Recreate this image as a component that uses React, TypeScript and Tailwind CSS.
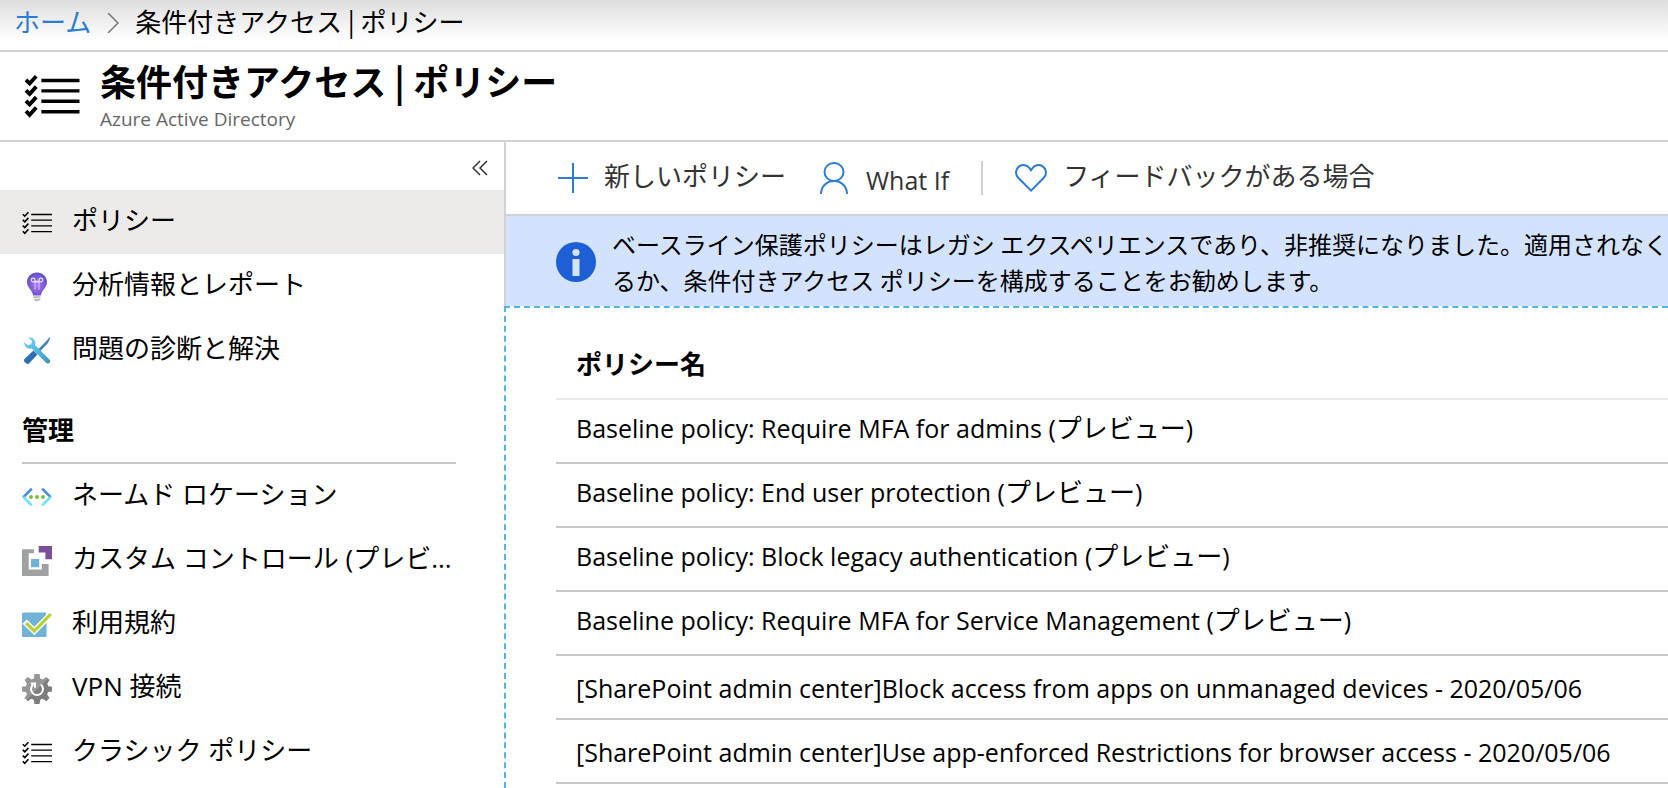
import type { ReactNode } from "react";

interface NavItem {
  label: ReactNode;
  icon: ReactNode;
  active?: boolean;
}

interface Policy {
  name: string;
  preview?: boolean;
}

const policies: Policy[] = [
  { name: "Baseline policy: Require MFA for admins", preview: true },
  { name: "Baseline policy: End user protection", preview: true },
  { name: "Baseline policy: Block legacy authentication", preview: true },
  { name: "Baseline policy: Require MFA for Service Management", preview: true },
  {
    name: "[SharePoint admin center]Block access from apps on unmanaged devices - 2020/05/06",
  },
  {
    name: "[SharePoint admin center]Use app-enforced Restrictions for browser access - 2020/05/06",
  },
];

function PolicyListIcon({ className, bold }: { className: string; bold?: boolean }) {
  return (
    <svg viewBox="0 0 30 24" fill="none" stroke="currentColor" className={className}>
      <path
        strokeWidth={bold ? 1.9 : 1.3}
        d="M9.2 3.5H30M9.2 9.2H30M9.2 14.9H30M9.2 20.6H30"
      />
      <path
        strokeWidth={bold ? 2.1 : 1.6}
        d="M.8 3.2l2 2L6.4 1.2M.8 8.9l2 2L6.4 6.9M.8 14.6l2 2L6.4 12.6M.8 20.3l2 2L6.4 18.3"
      />
    </svg>
  );
}

function BulbIcon() {
  return (
    <svg viewBox="0 0 30 30" className="size-[30px]">
      <defs>
        <radialGradient id="bulb" cx="0.5" cy="0.55" r="0.55">
          <stop offset="0" stopColor="#b077f0" />
          <stop offset="1" stopColor="#5f4fc8" />
        </radialGradient>
      </defs>
      <path
        fill="url(#bulb)"
        d="M15 0.500C9.300 0.500 5 4.800 5 10.100c0 5.600 4.600 7 6.200 13.400h7.600C20.400 17.100 25 15.700 25 10.100 25 4.800 20.700 0.500 15 0.500z"
      />
      <g fill="none" stroke="#efe3ff" strokeWidth="1.100">
        <path d="M13 9.400v8M17 9.400v8" opacity="0.7" />
        <path d="M17 9.400h-4M13 9.400v-1.400a1.900 1.900 0 1 0-1.900 1.900h7.800A1.900 1.900 0 1 0 17 8v1.400" />
      </g>
      <path
        fill="#b8b8b8"
        d="M11.300 24.200h7.200v1.400l-7.200.7zM11.700 27l6.600-.6v1.300L15.600 29.200h-2z"
      />
    </svg>
  );
}

function ToolsIcon() {
  return (
    <svg viewBox="0 0 30 30" className="size-[30px]">
      <defs>
        <linearGradient id="wrench" x1="0" y1="0" x2="1" y2="1">
          <stop offset="0" stopColor="#6fd3f5" />
          <stop offset="0.6" stopColor="#4fb2dc" />
          <stop offset="1" stopColor="#3c8fb8" />
        </linearGradient>
      </defs>
      <path fill="#2f6fb5" d="M11.500 14.500l4 4-9 9.500-2-.2L2 25.300l.2-2z" />
      <path fill="#3f87b5" d="M27.600 1.300l.8.8-2.600 5.200L17 16.400l-2-2 8.800-9z" />
      <path
        fill="url(#wrench)"
        d="M6.500 1.700c3-.9 6.600 1.200 6.800 5 .1.900 0 1.700-.3 2.400L27.600 23.700c1.800 2-1.200 5.200-3.300 3.300L9.800 12.400c-4 1.200-7.800-1.700-7.600-6.200l3.700 3 3.300-1 .8-3.200z"
      />
    </svg>
  );
}

function NamedLocationIcon() {
  return (
    <svg viewBox="0 0 30 30" className="size-[30px]">
      <g fill="none" strokeWidth="2.600">
        <path stroke="#3f8fdc" d="M9.800 6.700L1.200 15.400M20.200 6.700l8.600 8.700" />
        <path stroke="#6fe0fb" d="M1.200 14.800l8.600 8.500M28.800 14.800l-8.600 8.500" />
      </g>
      <g fill="#7fba3c">
        <circle cx="9" cy="15" r="1.900" />
        <circle cx="15" cy="15" r="1.900" />
        <circle cx="21" cy="15" r="1.900" />
      </g>
    </svg>
  );
}

function CustomControlIcon() {
  return (
    <svg viewBox="0 0 30 30" className="size-[30px]">
      <path fill="#a0a1a2" d="M0 3.300h12v4H6.700v16.200h13.100V18h6.800v12H0z" />
      <path fill="#7a4f98" d="M16.700 0H30v13.300h-6.600V6.500h-6.700z" />
      <path fill="#6fb3d6" d="M9 13h8.200v8.200H9z" />
    </svg>
  );
}

function TermsIcon() {
  return (
    <svg viewBox="0 0 30 30" className="size-[30px]">
      <rect y="2.500" width="24.500" height="24.500" rx="1.500" fill="#6fb3d6" />
      <path fill="none" stroke="#fff" strokeWidth="6" d="M2.600 11.600l9.700 9.400L30 3" />
      <path fill="none" stroke="#b8d030" strokeWidth="3.200" d="M4.200 13.200l8.100 7.900L28.800 4" />
    </svg>
  );
}

function VpnIcon() {
  return (
    <svg viewBox="0 0 30 30" className="size-[30px]">
      <defs>
        <linearGradient id="gear" x1="0" y1="0" x2="1" y2="1">
          <stop offset="0.5" stopColor="#969696" />
          <stop offset="0.5" stopColor="#7d7d7d" />
        </linearGradient>
      </defs>
      <path
        fill="url(#gear)"
        d="M12.500 0h5l.8 4.400 2.400 1 3.700-2.500 3.200 3.200-2.300 3.700 1 2.400 3.700.6v4.600l-3.900.6-1 2.400 2.500 3.500-3.400 3.400-3.500-2.500-2.400 1-.8 4.200h-5l-.8-4.200-2.400-1-3.500 2.500-3.400-3.400 2.500-3.500-1-2.400L0 17.400v-4.600l3.900-.6 1-2.400-2.300-3.700 3.200-3.200 3.700 2.500 2.400-1z"
      />
      <path
        fill="none"
        stroke="#fff"
        strokeWidth="2"
        d="M11.200 10.400a6 6 0 1 0 7.600 0M8.800 9.600h4.200v4.200"
      />
    </svg>
  );
}

function PlusIcon() {
  return (
    <svg viewBox="0 0 30 30" className="size-[30px]" stroke="#2b7cd3" strokeWidth="2">
      <path d="M15 0v30M0 15h30" />
    </svg>
  );
}

function PersonIcon() {
  return (
    <svg
      viewBox="0 0 28 32"
      className="h-8 w-7"
      fill="none"
      stroke="#2b7cd3"
      strokeWidth="2"
    >
      <ellipse cx="14" cy="10" rx="9.500" ry="9" />
      <path d="M1 32c0-7.500 5.500-13 13-13s13 5.500 13 13" />
    </svg>
  );
}

function HeartIcon() {
  return (
    <svg
      viewBox="0 0 32 28"
      className="h-7 w-8"
      fill="none"
      stroke="#2b7cd3"
      strokeWidth="2"
    >
      <path d="M16 26.600L3.200 13.800C-.2 10.200.6 4.700 4.200 2.300 8 0 12.600 1 14.600 4.200L16 6.300l1.400-2.100c2-3.200 6.600-4.200 10.400-1.900 3.600 2.400 4.400 7.900 1 11.500z" />
    </svg>
  );
}

function InfoIcon() {
  return (
    <svg viewBox="0 0 40 40" className="size-10 shrink-0">
      <circle cx="20" cy="20" r="20" fill="#1f5fd6" />
      <circle cx="20" cy="10.500" r="3.600" fill="#d4e3fd" />
      <path fill="#d4e3fd" d="M16.500 17h7v17h-7z" />
    </svg>
  );
}

const topItems: NavItem[] = [
  {
    label: "ポリシー",
    icon: <PolicyListIcon className="h-6 w-[30px]" />,
    active: true,
  },
  { label: "分析情報とレポート", icon: <BulbIcon /> },
  { label: "問題の診断と解決", icon: <ToolsIcon /> },
];

const manageItems: NavItem[] = [
  { label: "ネームド ロケーション", icon: <NamedLocationIcon /> },
  { label: "カスタム コントロール (プレビ...", icon: <CustomControlIcon /> },
  { label: "利用規約", icon: <TermsIcon /> },
  { label: "VPN 接続", icon: <VpnIcon /> },
  { label: "クラシック ポリシー", icon: <PolicyListIcon className="h-6 w-[30px]" /> },
];

function NavList({ items }: { items: NavItem[] }) {
  return (
    <ul>
      {items.map((item, i) => (
        <li key={i}>
          <a
            href="#"
            className={`flex h-16 items-center gap-5 pr-12 pl-[22px] ${
              item.active ? "bg-[#ecebe9]" : ""
            }`}
          >
            <span className="flex w-[30px] shrink-0 justify-center pt-0.5">
              {item.icon}
            </span>
            <span className="pb-1 leading-10 whitespace-nowrap">{item.label}</span>
          </a>
        </li>
      ))}
    </ul>
  );
}

function App() {
  return (
    <div className="flex min-h-screen flex-col bg-white font-['Open_Sans','Noto_Sans_CJK_JP',sans-serif] text-[26px] text-black">
      {/* Breadcrumb */}
      <nav className="flex h-[52px] items-center border-b-2 border-[#d2d2d2] bg-linear-to-b from-[#dedede] to-white to-80% pb-2 pl-[14px] font-['Noto_Sans_CJK_JP',sans-serif] leading-10">
        <a href="#" className="text-[#2b7cd3]">
          ホーム
        </a>
        <svg
          viewBox="0 0 12 20"
          className="mx-4 mt-1 h-5 w-3"
          fill="none"
          stroke="#777"
          strokeWidth="1.500"
        >
          <path d="M1 0l10 10L1 20" />
        </svg>
        <span>条件付きアクセス | ポリシー</span>
      </nav>

      {/* Title */}
      <header className="flex h-[90px] items-center gap-5 border-b-2 border-[#d2d2d2] pl-6">
        <PolicyListIcon className="h-11 w-14" bold />
        <div>
          <h1 className="font-['Noto_Sans_CJK_JP',sans-serif] text-[36px] leading-[42px] font-bold">
            条件付きアクセス | ポリシー
          </h1>
          <p className="pt-1 text-[19px] leading-7 text-[#666]">Azure Active Directory</p>
        </div>
      </header>

      <div className="flex flex-1">
        {/* Sidebar */}
        <aside className="w-[504px] shrink-0">
          <div className="flex h-12 items-center justify-end pt-1 pr-4">
            <button aria-label="メニューを折りたたむ">
              <svg
                viewBox="0 0 16 16"
                className="size-4"
                fill="none"
                stroke="#333"
                strokeWidth="1.500"
              >
                <path d="M8 1L1 8l7 7M15 1L8 8l7 7" />
              </svg>
            </button>
          </div>
          <NavList items={topItems} />
          <h2 className="mr-12 ml-[22px] flex h-[82px] items-end border-b-2 border-[#c8c8c8] pb-3 leading-10 font-bold">
            管理
          </h2>
          <NavList items={manageItems} />
        </aside>

        <main className="flex min-w-0 flex-1 flex-col">
          {/* Toolbar */}
          <div className="flex h-[74px] items-center border-b-2 border-l-2 border-[#d2d2d2] pl-[52px] text-[#333]">
            <button className="flex items-center gap-4">
              <PlusIcon />
              <span className="pb-1 leading-10">新しいポリシー</span>
            </button>
            <button className="ml-[34px] flex items-center gap-[18px]">
              <PersonIcon />
              <span className="pt-1 text-[25px] leading-10">What If</span>
            </button>
            <div className="mx-8 h-[34px] w-0.5 bg-[#d2d2d2]" />
            <button className="flex items-center gap-4">
              <HeartIcon />
              <span className="pb-1 leading-10">フィードバックがある場合</span>
            </button>
          </div>

          {/* Notice */}
          <div className="flex h-[92px] items-center gap-4 overflow-hidden border-l-2 border-[#d2d2d2] bg-[#d4e3fd] pl-[50px]">
            <InfoIcon />
            <p className="font-['Noto_Sans_CJK_JP',sans-serif] text-2xl leading-9 whitespace-nowrap">
              ベースライン保護ポリシーはレガシ エクスペリエンスであり、非推奨になりました。適用されなく
              <br />
              るか、条件付きアクセス ポリシーを構成することをお勧めします。
            </p>
          </div>

          {/* Policies */}
          <div className="-mt-0.5 flex-1 border-t-2 border-l-2 border-dashed border-[#50b5e9] bg-white pt-[27px] pl-[50px]">
            <table className="w-full border-collapse text-left">
              <thead>
                <tr className="h-16 border-b-2 border-[#eaeaea]">
                  <th className="pb-1 pl-5 font-bold">ポリシー名</th>
                </tr>
              </thead>
              <tbody>
                {policies.map((policy) => (
                  <tr key={policy.name} className="h-16 border-b-2 border-[#c8c8c8]">
                    <td
                      className={`pl-5 text-[25px] leading-10 whitespace-nowrap ${
                        policy.preview ? "pb-1.5" : "pt-0.5"
                      }`}
                    >
                      {policy.name}
                      {policy.preview && (
                        <>
                          {" ("}
                          <span className="text-[26px]">プレビュー</span>)
                        </>
                      )}
                    </td>
                  </tr>
                ))}
              </tbody>
            </table>
          </div>
        </main>
      </div>
    </div>
  );
}

export default App;
